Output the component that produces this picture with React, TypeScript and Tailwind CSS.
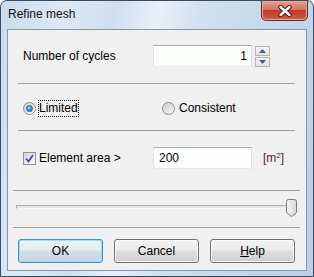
import React from "react";

function Separator({ wide }: { wide?: boolean }) {
  return (
    <div
      className={
        wide
          ? "h-px ml-[5px] w-[287px] bg-[#a0a0a0]"
          : "h-px ml-[10px] w-[277px] bg-[#a0a0a0]"
      }
    />
  );
}

function TextBox({ value, right }: { value: string; right?: boolean }) {
  return (
    <div
      className={
        right
          ? "w-[99px] h-[22px] flex items-center justify-end pr-[4px] border border-[#abadb3] border-b-[#e3e9ef] border-l-[#e2e3ea] border-r-[#dbdfe6] bg-[#fdfffd]"
          : "w-[99px] h-[22px] flex items-center pl-[5px] border border-[#abadb3] border-b-[#e3e9ef] border-l-[#e2e3ea] border-r-[#dbdfe6] bg-[#fdfffd]"
      }
    >
      {value}
    </div>
  );
}

function SpinArrow({ down }: { down?: boolean }) {
  return (
    <div className="w-[15px] h-[10px] border border-[#b4b4b4] bg-[linear-gradient(#f6f6f6,#e2e2e2)] flex items-center justify-center">
      <svg width="7" height="4" viewBox="0 0 7 4">
        {down ? (
          <path d="M0 0 H7 L3.5 4 Z" fill="#4b5d96" />
        ) : (
          <path d="M0 4 H7 L3.5 0 Z" fill="#4b5d96" />
        )}
      </svg>
    </div>
  );
}

function Radio({ checked }: { checked?: boolean }) {
  return (
    <div className="w-[13px] h-[13px] rounded-full border border-[#8b8b8b] bg-[linear-gradient(135deg,#d2d2d2,#fafafa)] flex items-center justify-center">
      {checked ? (
        <div className="w-[7px] h-[7px] rounded-full border border-[#1d5a9a] bg-[radial-gradient(circle_at_40%_35%,#b6ecff,#2d8de0_55%,#0e4f94)]" />
      ) : (
        <div className="w-[9px] h-[9px] rounded-full bg-[linear-gradient(135deg,#cfcfcf,#f4f4f4)]" />
      )}
    </div>
  );
}

function Checkbox() {
  return (
    <div className="w-[13px] h-[13px] border border-[#8e8f8f] bg-[linear-gradient(135deg,#d6d6d6,#fbfbfb)] flex items-center justify-center">
      <svg width="9" height="9" viewBox="0 0 9 9">
        <path
          d="M1 4.5 L3.5 7.5 L8 1"
          fill="none"
          stroke="#3d4f8c"
          strokeWidth="1.8"
        />
      </svg>
    </div>
  );
}

function WinButton({
  children,
  primary,
}: {
  children: React.ReactNode;
  primary?: boolean;
}) {
  return (
    <div
      className={
        primary
          ? "w-[85px] h-[24px] rounded-[3px] border border-[#3c8fd0] shadow-[inset_0_0_0_1px_#9fdcf7] bg-[linear-gradient(#eef4f8,#e3ecf2_45%,#d2dfe8_50%,#c6d6e2)] flex items-center justify-center"
          : "w-[85px] h-[24px] rounded-[3px] border border-[#707070] shadow-[inset_0_0_0_1px_#fcfcfc] bg-[linear-gradient(#f2f2f2,#ebebeb_45%,#dddddd_50%,#cfcfcf)] flex items-center justify-center"
      }
    >
      {children}
    </div>
  );
}

export default function App() {
  return (
    <div className="w-[314px] h-[277px] bg-white font-['Liberation_Sans',Arial,sans-serif] text-[12px] leading-[14px] text-black">
      <div className="w-full h-full rounded-t-[7px] border border-[#3b4a5c] bg-[linear-gradient(100deg,#c9dbee_0%,#dde8f4_18%,#cfdeee_32%,#e8eff8_44%,#d2e0ef_56%,#c6d8ec_75%,#b9cfe7_100%)] flex flex-col overflow-hidden">
        {/* title bar */}
        <div className="h-[28px] flex items-start">
          <div className="pl-[7px] pt-[6px] text-[#111]">Refine mesh</div>
          <div className="ml-auto mr-[5px] mt-[-1px] w-[47px] h-[21px] rounded-b-[5px] border border-[#5e2a25] shadow-[inset_0_0_0_1px_#e9a998] bg-[linear-gradient(#e8a291,#d37160_45%,#c0392b_50%,#d45d48)] flex items-center justify-center">
            <svg width="14" height="12" viewBox="0 0 14 12">
              <path
                d="M2.5 2 L11.5 10 M11.5 2 L2.5 10"
                stroke="#4a1e1a"
                strokeWidth="4.4"
                strokeLinecap="round"
              />
              <path
                d="M2.5 2 L11.5 10 M11.5 2 L2.5 10"
                stroke="#ffffff"
                strokeWidth="2.4"
                strokeLinecap="round"
              />
            </svg>
          </div>
        </div>

        <div className="flex-1 px-[6px] pb-[5px] flex">
          <div className="flex-1 border border-[#8797ad] bg-[#f0f0f0] flex flex-col">
            {/* cycles */}
            <div className="mt-[15px] h-[22px] flex items-center pl-[15px]">
              <div className="w-[130px]">Number of cycles</div>
              <TextBox value="1" right />
              <div className="ml-[3px] h-[22px] flex flex-col pt-[1px] gap-[1px]">
                <SpinArrow />
                <SpinArrow down />
              </div>
            </div>

            <div className="mt-[16px]">
              <Separator />
            </div>

            {/* radios */}
            <div className="mt-[16px] h-[16px] flex items-center pl-[15px]">
              <div className="w-[139px] flex items-center">
                <Radio checked />
                <div className="ml-[2px] h-[17px] flex items-center border border-dotted border-black">
                  Limited
                </div>
              </div>
              <Radio />
              <div className="ml-[4px]">Consistent</div>
            </div>

            <div className="mt-[14px]">
              <Separator />
            </div>

            {/* element area */}
            <div className="mt-[16px] h-[22px] flex items-center pl-[15px]">
              <div className="w-[130px] flex items-center">
                <Checkbox />
                <div className="ml-[3px]">Element area &gt;</div>
              </div>
              <TextBox value="200" />
              <div className="ml-[11px] text-[#5a1838]">
                [m<sup className="text-[8px]">2</sup>]
              </div>
            </div>

            <div className="mt-[21px]">
              <Separator wide />
            </div>

            {/* slider */}
            <div className="mt-[8px] ml-[8px] w-[281px] h-[18px] relative">
              <div className="mt-[6px] h-[4px] border border-[#b0b0b0] border-b-[#f8f8f8] bg-[#e4e4e4]" />
              <svg
                className="absolute right-0 top-0"
                width="11"
                height="18"
                viewBox="0 0 11 18"
              >
                <defs>
                  <linearGradient id="thumb" x1="0" y1="0" x2="1" y2="0">
                    <stop offset="0" stopColor="#f4f4f4" />
                    <stop offset="1" stopColor="#d8d8d8" />
                  </linearGradient>
                </defs>
                <path
                  d="M0.5 2.5 Q0.5 0.5 2.5 0.5 H8.5 Q10.5 0.5 10.5 2.5 V13.5 L5.5 17.5 L0.5 13.5 Z"
                  fill="url(#thumb)"
                  stroke="#7a7a7a"
                />
              </svg>
            </div>

            <div className="mt-[10px]">
              <Separator wide />
            </div>

            {/* buttons */}
            <div className="mt-[11px] pl-[10px] flex gap-[11px]">
              <WinButton primary>OK</WinButton>
              <WinButton>Cancel</WinButton>
              <WinButton>
                <span>
                  <span className="underline">H</span>elp
                </span>
              </WinButton>
            </div>
          </div>
        </div>
      </div>
    </div>
  );
}
